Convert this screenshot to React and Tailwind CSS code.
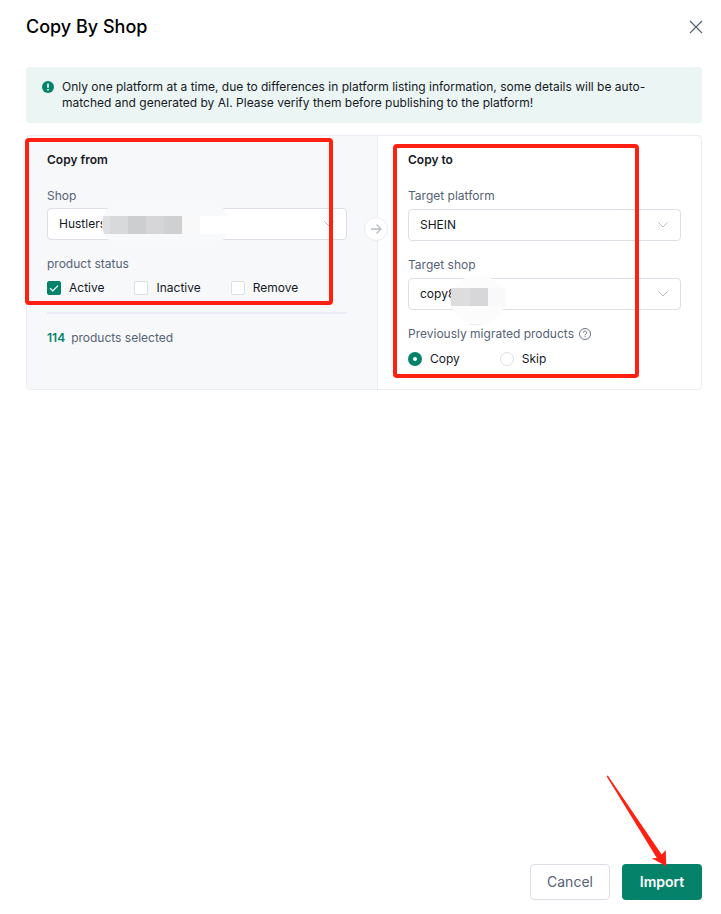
import { useState } from 'react'

const STATUSES = ['Active', 'Inactive', 'Remove']

// Masked part of the source shop name
function SourceMask() {
  return (
    <svg viewBox="0 0 128 48" className="pointer-events-none absolute -top-2 left-[54px] h-12 w-32">
      <defs>
        <clipPath id="source-mask">
          <rect x="1" width="127" height="48" rx="24" />
        </clipPath>
      </defs>
      <g clipPath="url(#source-mask)" shapeRendering="crispEdges">
        <rect width="128" height="48" fill="#f8f9fb" />
        <rect x="0" y="16" width="9" height="18" fill="#dedfe0" />
        <rect x="9" y="16" width="18" height="18" fill="#d8d9da" />
        <rect x="27" y="16" width="18" height="18" fill="#cdced0" />
        <rect x="45" y="16" width="18" height="18" fill="#d6d6d8" />
        <rect x="63" y="16" width="18" height="18" fill="#cfd0d2" />
        <rect x="81" y="16" width="18" height="18" fill="#f9f9f9" />
        <rect x="99" y="16" width="29" height="18" fill="#fff" />
      </g>
    </svg>
  )
}

// Masked part of the target shop name
function TargetMask() {
  return (
    <svg viewBox="0 0 58 52" className="pointer-events-none absolute -top-1 left-[42px] h-[52px] w-[58px]">
      <ellipse cx="28" cy="26" rx="27" ry="25" fill="#fcfcfc" />
      <path d="M20 50.500h11" stroke="#e9e9eb" />
      <g shapeRendering="crispEdges">
        <rect x="1" y="14" width="19" height="18" fill="#dddddd" />
        <rect x="20" y="14" width="18" height="18" fill="#d7d7d9" />
        <rect x="38" y="14" width="18" height="18" fill="#f9f9f9" />
      </g>
    </svg>
  )
}

function SelectField({ id, label, options, labelClass, children }) {
  return (
    <div>
      <label htmlFor={id} className={`block leading-5 text-[#566276] ${labelClass}`}>{label}</label>
      <div className="relative">
        <select
          id={id}
          className="block h-8 w-full appearance-none rounded border border-[#dcdfe6] bg-white pr-8 pl-[11px] text-xs text-[#16191f] outline-none"
        >
          {options.map((o) => (
            <option key={o}>{o}</option>
          ))}
        </select>
        <svg viewBox="0 0 12 12" className="pointer-events-none absolute top-2.5 right-3 size-3" fill="none" stroke="#b4b8c1">
          <path d="M1.500 3.500 6 8l4.500-4.500" />
        </svg>
        {children}
      </div>
    </div>
  )
}

export default function App() {
  const [checked, setChecked] = useState(['Active'])
  const [mode, setMode] = useState('Copy')

  function toggle(status) {
    setChecked((prev) => (prev.includes(status) ? prev.filter((s) => s !== status) : [...prev, status]))
  }

  return (
    <div className="flex min-h-screen flex-col bg-white font-['Inter',sans-serif] text-xs text-[#16191f]">
      {/* Header */}
      <header className="flex h-[54px] items-center justify-between pr-[19px] pl-[26px]">
        <h1 className="text-lg leading-6 font-medium text-black">Copy By Shop</h1>
        <button type="button" aria-label="Close" className="size-3">
          <svg viewBox="0 0 12 12" className="size-3 overflow-visible" stroke="#566072" strokeWidth="1.2">
            <path d="M0 0 12 12M12 0 0 12" />
          </svg>
        </button>
      </header>

      <main className="flex-1 pt-[13px] pr-[19px] pl-[26px]">
        {/* Notice */}
        <div className="flex gap-2 rounded bg-[#ebf5f3] px-4 py-3">
          <svg viewBox="0 0 12 12" className="mt-0.5 size-3 shrink-0">
            <circle cx="6" cy="6" r="6" fill="#04836a" />
            <path d="M6 2.500v4.200M6 8v1.600" stroke="#fff" strokeWidth="1.6" />
          </svg>
          <p className="leading-4">
            Only one platform at a time, due to differences in platform listing information, some details will be auto-matched and generated by AI. Please verify them before publishing to the platform!
          </p>
        </div>

        <div className="mt-3 flex rounded border border-[#ebecf3]">
          {/* Copy from */}
          <section className="relative flex-[300] rounded-l border-r border-[#ebecf3] bg-[#f6f8fa] pt-3.5 pr-[30px] pb-[41px] pl-5">
            <h2 className="mb-4 leading-5 font-semibold">Copy from</h2>
            <SelectField id="shop" label="Shop" options={['Hustlers']} labelClass="mb-0.5">
              <SourceMask />
            </SelectField>
            <fieldset className="mt-3.5">
              <legend className="leading-5 text-[#566276]">product status</legend>
              <div className="mt-1 flex gap-[30px]">
                {STATUSES.map((s) => (
                  <label key={s} className="flex items-center gap-2 leading-5">
                    <span className="relative flex size-3.5">
                      <input
                        type="checkbox"
                        checked={checked.includes(s)}
                        onChange={() => toggle(s)}
                        className="peer size-3.5 appearance-none rounded-xs border border-[#dcdfe6] bg-white checked:border-[#04836a] checked:bg-[#04836a]"
                      />
                      <svg viewBox="0 0 14 14" className="pointer-events-none absolute inset-0 hidden size-3.5 peer-checked:block" fill="none" stroke="#fff" strokeWidth="1.2">
                        <path d="m3 7.200 2.800 2.600L11 4.600" />
                      </svg>
                    </span>
                    {s}
                  </label>
                ))}
              </div>
            </fieldset>
            <hr className="mt-3.5 border-t-2 border-[#ebecf3]" />
            <p className="mt-3.5 leading-5 text-[#566276]">
              <span className="mr-1.5 font-semibold text-[#04836a]">114</span>products selected
            </p>
            <div className="absolute top-[81px] -right-[11px] flex size-6 items-center justify-center rounded-full border border-[#ebecf3] bg-white">
              <svg viewBox="0 0 12 12" className="size-3" fill="none" stroke="#b9bcc6" strokeWidth="1.3">
                <path d="M1 6h10M6.500 1.500 11 6l-4.500 4.500" />
              </svg>
            </div>
            {/* Highlight */}
            <div className="pointer-events-none absolute top-0.5 right-11 bottom-[84px] -left-0.5 rounded border-4 border-[#ff2011]" />
          </section>

          {/* Copy to */}
          <section className="relative flex-[273] pt-3.5 pr-5 pl-[30px]">
            <h2 className="mb-4 leading-5 font-semibold">Copy to</h2>
            <SelectField id="platform" label="Target platform" options={['SHEIN']} labelClass="mb-[3px]" />
            <div className="mt-3.5">
              <SelectField id="target" label="Target shop" options={['copy8']} labelClass="mb-[3px]">
                <TargetMask />
              </SelectField>
            </div>
            <fieldset className="mt-3.5">
              <legend className="flex items-center gap-[5px] leading-5 text-[#566276]">
                Previously migrated products
                <svg viewBox="0 0 12 12" className="size-3 overflow-visible" fill="none" stroke="#6b7485">
                  <circle cx="6" cy="6" r="5.500" />
                  <path d="M4.300 4.800a1.700 1.700 0 1 1 2.600 1.400q-.9.500-.9 1.200M6 8.200v1" />
                </svg>
              </legend>
              <div className="mt-[5px] flex gap-10">
                {['Copy', 'Skip'].map((m) => (
                  <label key={m} className="flex items-center gap-2 leading-5">
                    <input
                      type="radio"
                      name="mode"
                      checked={mode === m}
                      onChange={() => setMode(m)}
                      className="size-3.5 appearance-none rounded-full border border-[#dcdfe6] bg-white checked:border-5 checked:border-[#04836a]"
                    />
                    {m}
                  </label>
                ))}
              </div>
            </fieldset>
            {/* Highlight */}
            <div className="pointer-events-none absolute top-2 right-[62px] bottom-[11px] left-[15px] rounded border-4 border-[#ff2011]" />
          </section>
        </div>
      </main>

      {/* Footer */}
      <footer className="flex justify-end gap-3 pr-[19px] pb-3.5 text-sm">
        <button type="button" className="h-9 w-20 rounded border border-[#dcdfe6] bg-white text-[#566276]">Cancel</button>
        <div className="relative">
          <button type="button" className="h-9 w-20 rounded bg-[#04836a] font-semibold text-white">Import</button>
          <svg viewBox="0 0 62 93" className="pointer-events-none absolute right-[34px] bottom-8 h-[93px] w-[62px]" fill="#ff2011">
            <path d="M.6 1.200 1.800.6 55.700 79.500l4-4.500.600 16.300L45.700 83.300l5.100-.2Z" />
          </svg>
        </div>
      </footer>
    </div>
  )
}
